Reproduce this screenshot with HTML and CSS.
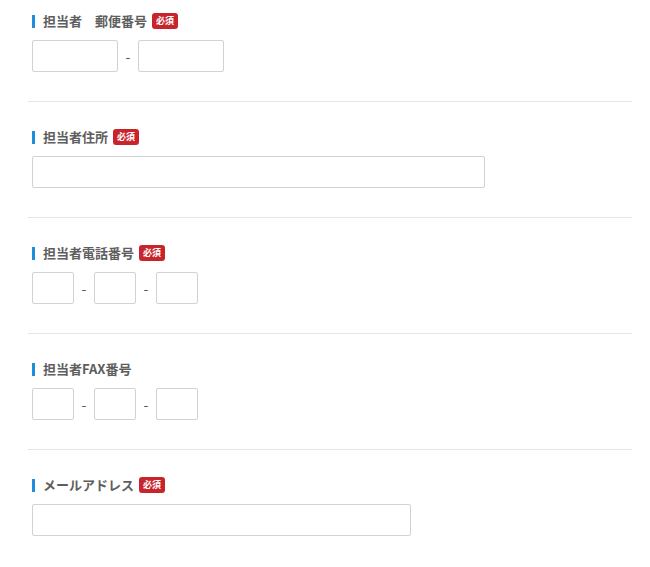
FILE: index.html
```html
<!DOCTYPE html>
<html lang="ja">

<head>
  <meta charset="UTF-8">
  <meta name="viewport" content="width=device-width, initial-scale=1.0">
  <title>お問い合わせ</title>
  <link rel="stylesheet" href="styles.css">
</head>

<body>
  <div class="form">
    <section class="row">
      <p class="label">担当者　郵便番号<span class="must">必須</span></p>
      <div class="fields">
        <input type="text" class="zip">
        <span class="dash">-</span>
        <input type="text" class="zip">
      </div>
    </section>
    <section class="row">
      <p class="label">担当者住所<span class="must">必須</span></p>
      <div class="fields">
        <input type="text" class="addr">
      </div>
    </section>
    <section class="row">
      <p class="label">担当者電話番号<span class="must">必須</span></p>
      <div class="fields">
        <input type="text" class="tel">
        <span class="dash">-</span>
        <input type="text" class="tel">
        <span class="dash">-</span>
        <input type="text" class="tel">
      </div>
    </section>
    <section class="row">
      <p class="label">担当者FAX番号</p>
      <div class="fields">
        <input type="text" class="tel">
        <span class="dash">-</span>
        <input type="text" class="tel">
        <span class="dash">-</span>
        <input type="text" class="tel">
      </div>
    </section>
    <section class="row">
      <p class="label">メールアドレス<span class="must">必須</span></p>
      <div class="fields">
        <input type="text" class="mail">
      </div>
    </section>
  </div>
</body>

</html>
```

FILE: styles.css
```css
* {
  margin: 0;
  padding: 0;
  box-sizing: border-box;
}

body {
  background-color: #fff;
  font-family: "Noto Sans CJK JP", "Noto Sans", sans-serif;
  color: #5e5e5e;
}

.form {
  width: 604px;
  margin-left: 28px;
}

.row {
  padding: 25px 4px 29px;
  border-bottom: 1px solid #e5e5e5;
}

.row:first-child {
  padding-top: 11px;
}

.row:last-child {
  border-bottom: none;
}

.label {
  display: flex;
  align-items: center;
  position: relative;
  height: 20px;
  margin-bottom: 9px;
  padding-left: 11px;
  font-size: 13px;
  font-weight: bold;
  line-height: 20px;
}

/* 見出しの青いバー */
.label::before {
  content: "";
  position: absolute;
  left: 0;
  top: 4px;
  width: 3px;
  height: 13px;
  background-color: #1d8ddc;
}

.must {
  display: inline-block;
  margin-left: 5px;
  padding: 0 4px;
  height: 16px;
  border-radius: 3px;
  background-color: #c8242b;
  color: #fff;
  font-size: 9px;
  line-height: 16px;
}

.fields {
  display: flex;
  align-items: center;
}

input {
  height: 32px;
  border: 1px solid #d2d2d2;
  border-radius: 2px;
  background-color: #fff;
  outline: none;
}

.zip {
  width: 86px;
}

.tel {
  width: 42px;
}

.addr {
  width: 453px;
}

.mail {
  width: 379px;
}

.dash {
  width: 20px;
  text-align: center;
  font-size: 14px;
  color: #555;
}
```
